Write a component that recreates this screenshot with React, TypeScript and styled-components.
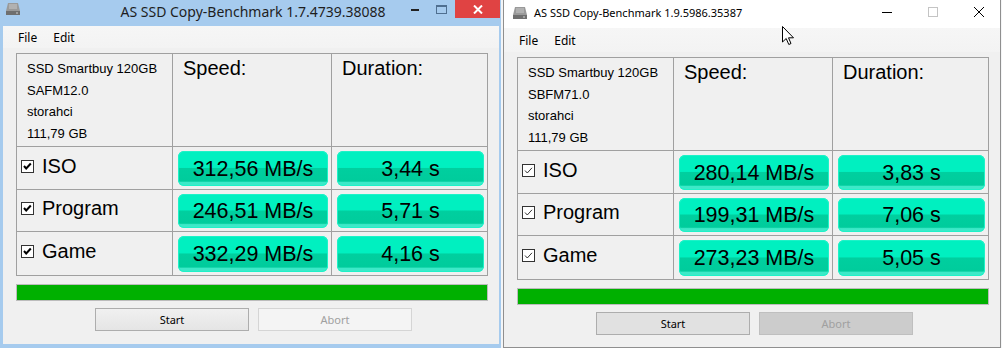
import React from 'react';
import styled, { createGlobalStyle } from 'styled-components';

const GlobalStyle = createGlobalStyle`
    html, body {
        margin: 0;
        padding: 0;
        background: #f0f0f0;
    }
`;

const UI_FONT = `'Noto Sans', 'Liberation Sans', sans-serif`;
const APP_FONT = `'Liberation Sans', Arial, sans-serif`;

const Desktop = styled.div`
    position: relative;
    display: flex;
    width: 1002px;
    height: 348px;
    overflow: hidden;
    background: #f4f5f6;
`;

const Win8Frame = styled.div`
    display: flex;
    flex-direction: column;
    width: 501px;
    height: 348px;
    box-sizing: border-box;
    padding: 0 2px 4px 3px;
    background: #a6cbee;
`;

const Win8TitleBar = styled.div`
    position: relative;
    display: flex;
    align-items: center;
    justify-content: center;
    height: 26px;
    flex-shrink: 0;
`;

const Win8Title = styled.div`
    font-family: ${UI_FONT};
    font-size: 14px;
    color: #1e1e1e;
    margin-top: -4px;
    margin-left: 4px;
`;

const Win8Icon = styled.div`
    position: absolute;
    left: 2px;
    top: 2px;
`;

const Win8Controls = styled.div`
    position: absolute;
    right: -1px;
    top: 0;
    display: flex;
    align-items: flex-start;
`;

const Win8Btn = styled.div<{ $w: number }>`
    display: flex;
    align-items: center;
    justify-content: center;
    width: ${(p) => p.$w}px;
    height: 18px;
`;

const Win8Close = styled(Win8Btn)`
    background: #e04343;
`;

const Win10Frame = styled.div`
    display: flex;
    flex-direction: column;
    width: 498px;
    height: 348px;
    box-sizing: border-box;
    margin-left: 2px;
    border-left: 1px solid #8f8f8f;
    border-right: 1px solid #8f8f8f;
    border-bottom: 1px solid #8f8f8f;
    background: #ffffff;
`;

const Win10TitleBar = styled.div`
    display: flex;
    align-items: center;
    height: 28px;
    flex-shrink: 0;
    background: #ffffff;
`;

const Win10Title = styled.div`
    font-family: ${UI_FONT};
    font-size: 11px;
    color: #000;
    margin-left: 6px;
    margin-top: -4px;
    flex: 1;
`;

const Win10IconWrap = styled.div`
    display: flex;
    margin-left: 8px;
    margin-top: -3px;
`;

const Win10Controls = styled.div`
    display: flex;
    align-items: center;
    height: 28px;
    margin-top: -4px;
    margin-right: -2px;
`;

const Win10Btn = styled.div`
    display: flex;
    align-items: center;
    justify-content: center;
    width: 46px;
    height: 28px;
`;

const Client = styled.div<{ $menuH: number }>`
    display: flex;
    flex-direction: column;
    flex: 1;
    background: #f0f0f0;
    --menu-h: ${(p) => p.$menuH}px;
`;

const MenuBar = styled.div`
    display: flex;
    align-items: center;
    gap: 16px;
    height: var(--menu-h);
    padding-left: 15px;
    background: linear-gradient(#f6f6f6, #f3f3f3);
    font-family: ${UI_FONT};
    font-size: 12px;
    color: #000;
`;

const Body = styled.div`
    display: flex;
    flex-direction: column;
    padding: 5px 12px 0 13px;
`;

const Table = styled.div`
    display: grid;
    grid-template-columns: 155px 158px 155px;
    grid-template-rows: 92px 42px 41px 43px;
    gap: 1px;
    padding: 1px;
    background: #a0a0a0;
    width: max-content;
`;

const Cell = styled.div`
    background: #f0f0f0;
    display: flex;
    min-width: 0;
`;

const InfoCell = styled(Cell)`
    flex-direction: column;
    padding: 4px 0 0 10px;
    font-family: ${APP_FONT};
    font-size: 13px;
    line-height: 21.5px;
    color: #000;
`;

const HeaderCell = styled(Cell)`
    padding: 3px 0 0 10px;
    font-family: ${APP_FONT};
    font-size: 20px;
    line-height: 22px;
    color: #000;
`;

const LabelCell = styled(Cell)`
    align-items: center;
    gap: 8px;
    padding: 0 0 4px 4px;
    font-family: ${APP_FONT};
    font-size: 20px;
    color: #000;
`;

const ResultCell = styled(Cell)`
    padding: 4px 3px 3px 5px;
`;

const ResultBox = styled.div`
    flex: 1;
    display: flex;
    align-items: center;
    justify-content: center;
    padding-top: 1px;
    border-radius: 6px;
    background: linear-gradient(
        #00f0c0 0%,
        #00f0c0 47%,
        #00cf9f 50%,
        #00cc9c 86%,
        #3de9c8 90%,
        #3de9c8 100%
    );
    box-shadow: inset 0 0 0 1px #1ef2c8;
    font-family: ${APP_FONT};
    font-size: 21.5px;
    color: #000;
`;

const Progress = styled.div`
    height: 15px;
    margin-top: 8px;
    width: 470px;
    border: 1px solid #bcbcbc;
    background: #00b000;
`;

const ButtonRow = styled.div`
    display: flex;
    gap: 9px;
    margin-top: 7px;
    padding-left: 79px;
`;

const Button = styled.div<{ $disabled?: boolean; $flat?: boolean }>`
    display: flex;
    align-items: center;
    justify-content: center;
    width: 154px;
    height: 23px;
    box-sizing: border-box;
    font-family: ${UI_FONT};
    font-size: 11px;
    color: ${(p) => (p.$disabled ? '#a0a0a0' : '#000')};
    border: 1px solid ${(p) => (p.$disabled ? (p.$flat ? '#bfbfbf' : '#d5d5d5') : '#adadad')};
    background: ${(p) =>
        p.$disabled
            ? p.$flat
                ? '#cccccc'
                : '#f4f4f4'
            : p.$flat
            ? '#e1e1e1'
            : 'linear-gradient(#f0f0f0, #e5e5e5)'};
`;

const Cursor = styled.div`
    position: absolute;
    left: 782px;
    top: 26px;
    line-height: 0;
`;

const DriveIcon = () => (
    <svg width="16" height="14" viewBox="0 0 16 14">
        <path d="M3 1 h10 l2 8 v4 h-14 v-4 z" fill="#9a9a9a" />
        <rect x="1" y="9" width="14" height="4" fill="#6f6f6f" />
        <path d="M5 2 v5 M7 2 v5 M9 2 v5 M11 2 v5" stroke="#c8c8c8" strokeWidth="1" />
        <rect x="11" y="10.5" width="2" height="1" fill="#d0d0d0" />
    </svg>
);

const Check = ({ modern }: { modern?: boolean }) => (
    <svg width="13" height="13" viewBox="0 0 13 13">
        <rect x="0.5" y="0.5" width="12" height="12" fill="#fff" stroke="#333" />
        {modern ? (
            <path d="M3 6.5 L5.3 9 L10 3.8" fill="none" stroke="#333" strokeWidth="1" />
        ) : (
            <path d="M3 6 L5.2 8.5 L9.8 3.5" fill="none" stroke="#000" strokeWidth="2" />
        )}
    </svg>
);

type Result = { label: string; speed: string; duration: string };

type PanelProps = {
    firmware: string;
    results: Result[];
    modern?: boolean;
    menuH: number;
};

const Panel = ({ firmware, results, modern, menuH }: PanelProps) => (
    <Client $menuH={menuH}>
        <MenuBar>
            <span>File</span>
            <span>Edit</span>
        </MenuBar>
        <Body>
            <Table>
                <InfoCell>
                    <span>SSD Smartbuy 120GB</span>
                    <span>{firmware}</span>
                    <span>storahci</span>
                    <span>111,79 GB</span>
                </InfoCell>
                <HeaderCell>Speed:</HeaderCell>
                <HeaderCell>Duration:</HeaderCell>
                {results.map((r) => (
                    <React.Fragment key={r.label}>
                        <LabelCell>
                            <Check modern={modern} />
                            <span>{r.label}</span>
                        </LabelCell>
                        <ResultCell>
                            <ResultBox>{r.speed}</ResultBox>
                        </ResultCell>
                        <ResultCell>
                            <ResultBox>{r.duration}</ResultBox>
                        </ResultCell>
                    </React.Fragment>
                ))}
            </Table>
            <Progress />
            <ButtonRow>
                <Button $flat={modern}>Start</Button>
                <Button $flat={modern} $disabled>
                    Abort
                </Button>
            </ButtonRow>
        </Body>
    </Client>
);

const oldResults: Result[] = [
    { label: 'ISO', speed: '312,56 MB/s', duration: '3,44 s' },
    { label: 'Program', speed: '246,51 MB/s', duration: '5,71 s' },
    { label: 'Game', speed: '332,29 MB/s', duration: '4,16 s' },
];

const newResults: Result[] = [
    { label: 'ISO', speed: '280,14 MB/s', duration: '3,83 s' },
    { label: 'Program', speed: '199,31 MB/s', duration: '7,06 s' },
    { label: 'Game', speed: '273,23 MB/s', duration: '5,05 s' },
];

export default function App() {
    return (
        <>
            <GlobalStyle />
            <Desktop>
                <Win8Frame>
                    <Win8TitleBar>
                        <Win8Icon>
                            <DriveIcon />
                        </Win8Icon>
                        <Win8Title>AS SSD Copy-Benchmark 1.7.4739.38088</Win8Title>
                        <Win8Controls>
                            <Win8Btn $w={26}>
                                <svg width="8" height="3" viewBox="0 0 8 3">
                                    <rect width="8" height="2" y="1" fill="#222" />
                                </svg>
                            </Win8Btn>
                            <Win8Btn $w={27}>
                                <svg width="11" height="9" viewBox="0 0 11 9">
                                    <rect x="0.5" y="0.5" width="10" height="8" fill="none" stroke="#4f6f90" />
                                    <rect x="0" y="0" width="11" height="2" fill="#4f6f90" />
                                </svg>
                            </Win8Btn>
                            <Win8Close $w={45}>
                                <svg width="10" height="9" viewBox="0 0 10 9">
                                    <path d="M1 0.5 L9 8.5 M9 0.5 L1 8.5" stroke="#fff" strokeWidth="2" />
                                </svg>
                            </Win8Close>
                        </Win8Controls>
                    </Win8TitleBar>
                    <Panel firmware="SAFM12.0" results={oldResults} menuH={22} />
                </Win8Frame>
                <Win10Frame>
                    <Win10TitleBar>
                        <Win10IconWrap>
                            <DriveIcon />
                        </Win10IconWrap>
                        <Win10Title>AS SSD Copy-Benchmark 1.9.5986.35387</Win10Title>
                        <Win10Controls>
                            <Win10Btn>
                                <svg width="10" height="1" viewBox="0 0 10 1">
                                    <rect width="10" height="1" fill="#000" />
                                </svg>
                            </Win10Btn>
                            <Win10Btn>
                                <svg width="10" height="10" viewBox="0 0 10 10">
                                    <rect x="0.5" y="0.5" width="9" height="9" fill="none" stroke="#c4c4c4" />
                                </svg>
                            </Win10Btn>
                            <Win10Btn>
                                <svg width="10" height="10" viewBox="0 0 10 10">
                                    <path d="M0 0 L10 10 M10 0 L0 10" stroke="#000" strokeWidth="1" />
                                </svg>
                            </Win10Btn>
                        </Win10Controls>
                    </Win10TitleBar>
                    <Panel firmware="SBFM71.0" results={newResults} modern menuH={24} />
                </Win10Frame>
                <Cursor>
                    <svg width="13" height="20" viewBox="0 0 13 20">
                        <path
                            d="M0.5 0.5 L0.5 16 L4.2 12.5 L6.8 18.5 L9 17.5 L6.5 11.8 L11.5 11.8 Z"
                            fill="#fff"
                            stroke="#000"
                            strokeWidth="1"
                        />
                    </svg>
                </Cursor>
            </Desktop>
        </>
    );
}
